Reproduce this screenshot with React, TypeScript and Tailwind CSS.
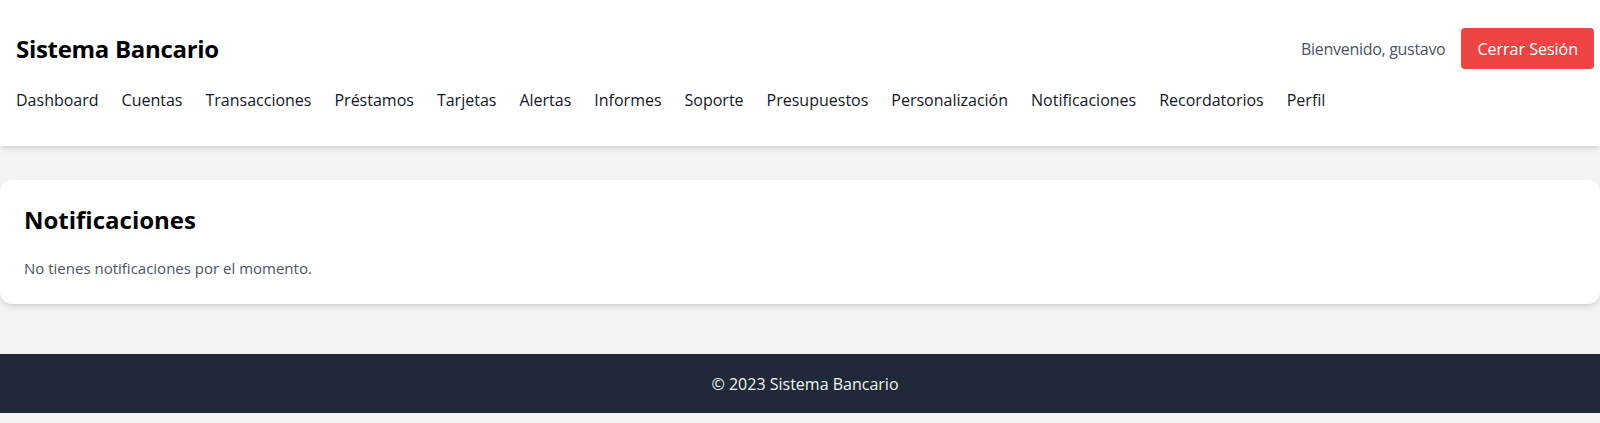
import React from 'react';

const navItems = [
  'Dashboard',
  'Cuentas',
  'Transacciones',
  'Préstamos',
  'Tarjetas',
  'Alertas',
  'Informes',
  'Soporte',
  'Presupuestos',
  'Personalización',
  'Notificaciones',
  'Recordatorios',
  'Perfil',
];

function Header() {
  return (
    <header className="bg-white shadow-md pl-4 pr-1.5 pt-7 pb-[34px]">
      <div className="flex items-center justify-between">
        <h1 className="text-2xl font-bold text-black tracking-[-0.3px]">Sistema Bancario</h1>
        <div className="flex items-center">
          <span className="text-[#4b5563] mr-4 tracking-[-0.3px]">Bienvenido, gustavo</span>
          <button className="bg-[#ef4444] text-white px-4 py-2 rounded h-[41px]">Cerrar Sesión</button>
        </div>
      </div>
      <nav className="mt-[19px] flex gap-[23px] text-[#111827]">
        {navItems.map((item) => (
          <a key={item} href="#" className="leading-6">
            {item}
          </a>
        ))}
      </nav>
    </header>
  );
}

export default function App() {
  return (
    <div className="h-screen bg-[#f3f4f6] font-['Open_Sans','Liberation_Sans',sans-serif]">
      <Header />
      <main className="pt-[34px] pb-[50px]">
        <div className="bg-white rounded-xl shadow-md p-6">
          <h2 className="text-2xl font-bold text-black mb-5">Notificaciones</h2>
          <p className="text-[#4b5563] text-[15px] leading-6">No tienes notificaciones por el momento.</p>
        </div>
      </main>
      <footer className="bg-[#1f2937] h-[59px] flex items-center justify-center pl-[10px]">
        <p className="text-[#f3f4f6]">© 2023 Sistema Bancario</p>
      </footer>
    </div>
  );
}
